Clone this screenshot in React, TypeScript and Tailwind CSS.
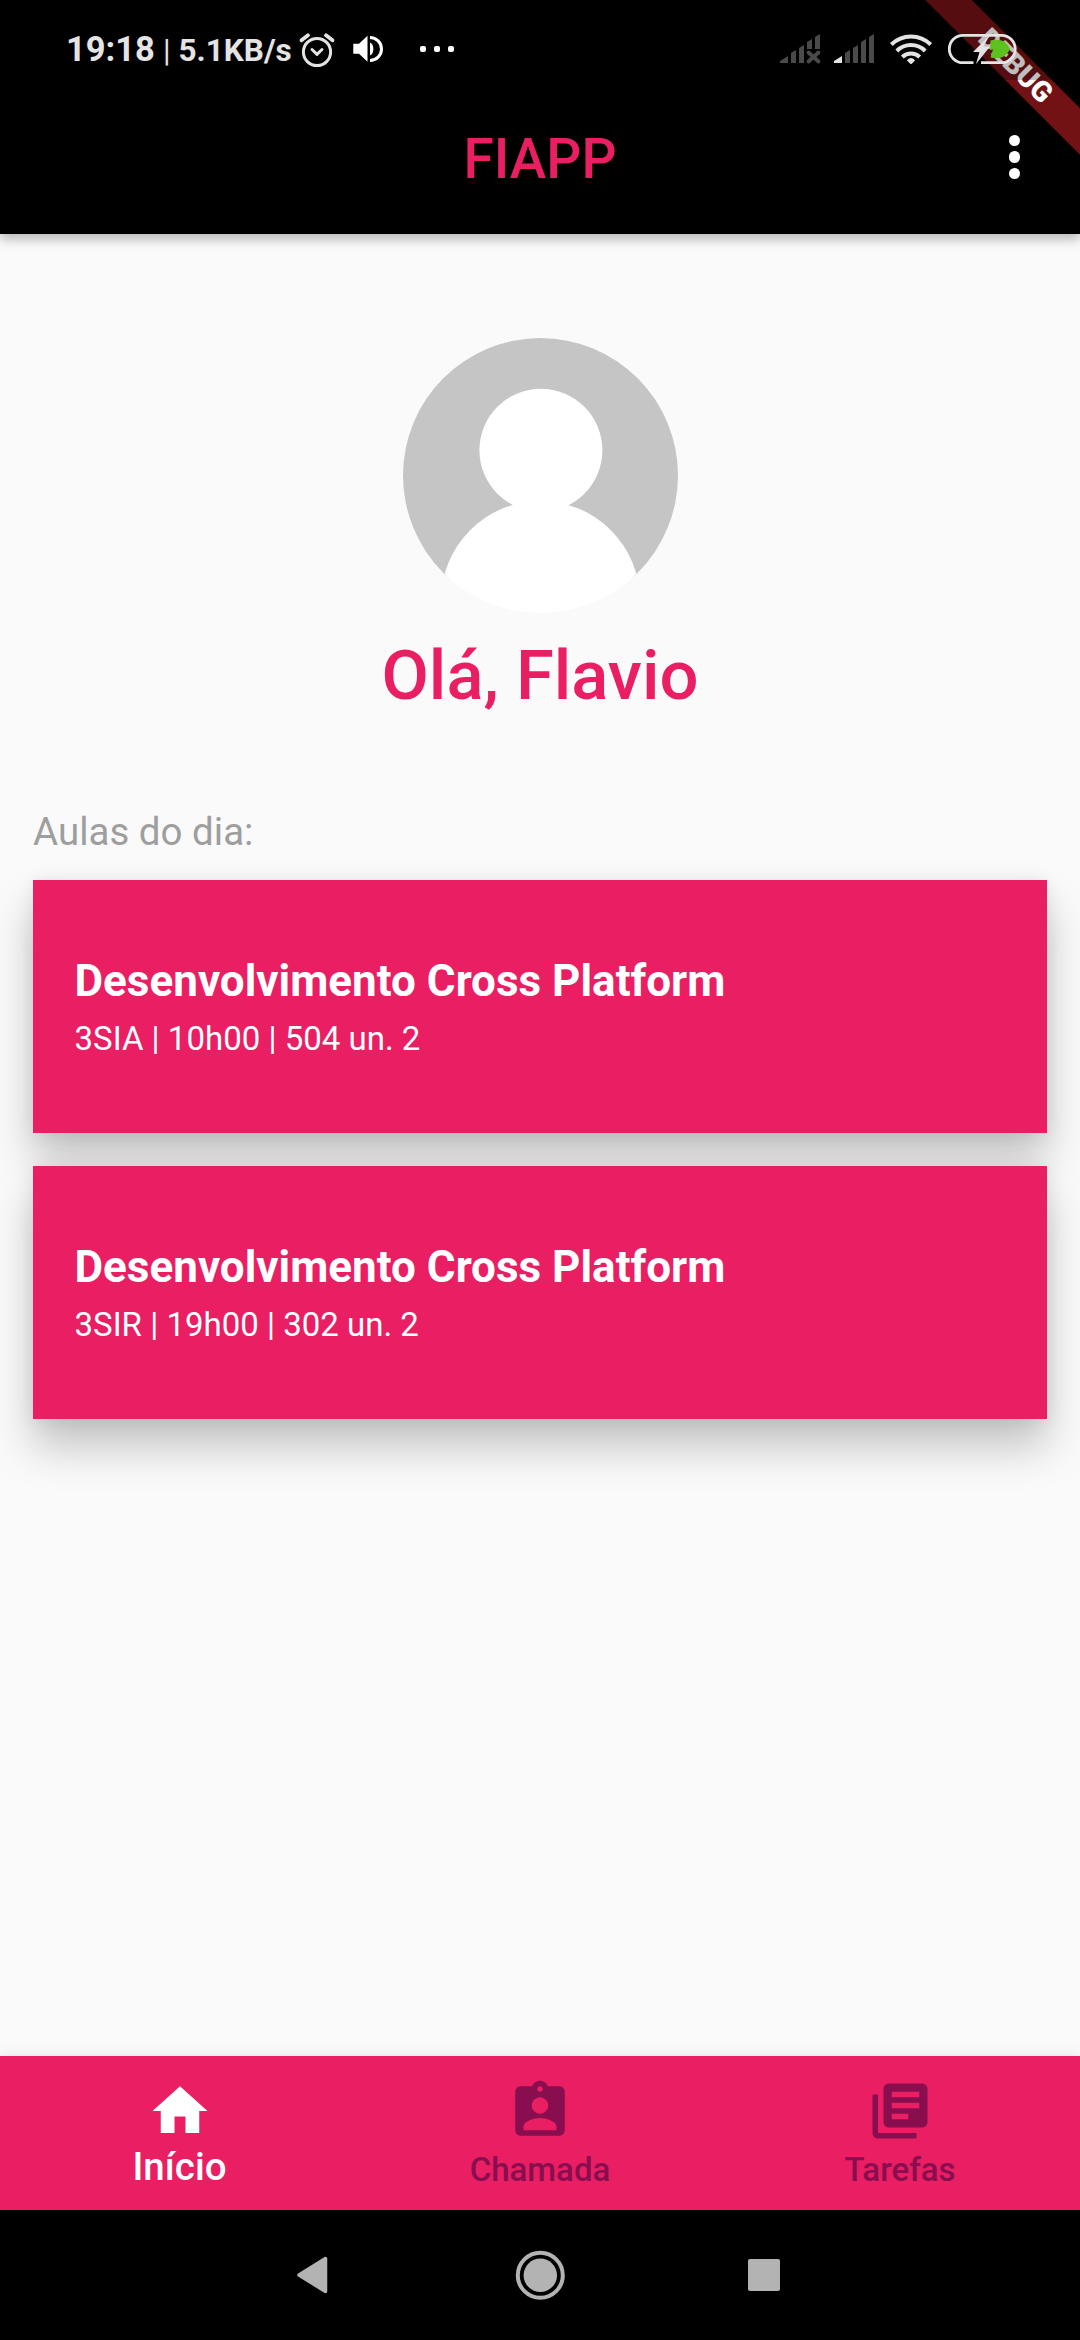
import React from "react";
import { MdAssignmentInd, MdHome, MdLibraryBooks } from "react-icons/md";

function StatusBar() {
  return (
    <div className="relative z-20 flex h-20 items-start bg-black/25 text-[#e4e4e4]">
      <div className="flex h-[100px] w-[294px] shrink-0 items-baseline whitespace-pre pl-[66px] pt-[29px] leading-[40px]">
        <span className="text-[34.500px] font-bold">19:18</span>
        <span className="ml-[8px] text-[31px]">|</span>
        <span className="ml-[8px] text-[31.500px] font-bold">5.1KB/s</span>
      </div>
      <svg className="h-20 w-[786px] shrink-0" viewBox="294 0 786 80" fill="none">
        <g stroke="#e4e4e4" strokeWidth="3" strokeLinecap="round" strokeLinejoin="round">
          <circle cx="317" cy="52" r="13.6" />
          <path d="M312 49.500l5 4.800 5-4.800" />
          <path d="M301.500 40.300l6.500-5M332.500 40.300l-6.500-5" strokeWidth="3.800" />
        </g>
        <path d="M353.300 43.700h5.700l8.500-8v26l-8.500-8h-5.700z" fill="#fff" />
        <path d="M370 42.500c4.500 2 4.500 11 0 13z" fill="#fff" />
        <path d="M370 37.500a11.500 11.500 0 0 1 0 23" stroke="#fff" strokeWidth="3" />
        <g fill="#fff">
          <rect x="420" y="46" width="6" height="6" rx="2" />
          <rect x="434" y="46" width="6" height="6" rx="2" />
          <rect x="448" y="46" width="6" height="6" rx="2" />
        </g>
        <g fill="#4a4a4a">
          <path d="M780 63v-2l8-5v7zM791 63v-10l5-3v13zM799 63V48l5-3v18zM807 49v-7l5-3v10zM815 49V37l5-3v15z" />
          <path d="M845 63V53l5-3v13zM853 63V48l5-3v18zM861 63V42l5-3v24zM869 63V37l5-3v29z" />
        </g>
        <path d="M808.500 52.500l10 9M818.500 52.500l-10 9" stroke="#4a4a4a" strokeWidth="3.800" strokeLinecap="round" />
        <path d="M834 63v-2l8-5v7z" fill="#e4e4e4" />
        <g stroke="#e4e4e4" strokeWidth="4">
          <path d="M891.300 44.500a28 28 0 0 1 39.400 0" />
          <path d="M896.800 51a20 20 0 0 1 28.400 0" />
          <path d="M902.300 57a12.500 12.500 0 0 1 17.400 0" />
        </g>
        <path d="M911 58q3 0 4 2.500l-3 3q-1 1-2 0l-3-3q1-2.500 4-2.500z" fill="#e4e4e4" />
        <path d="M990.500 40.500q5-1.500 11 0c4 1 6.500 4.500 8.500 8.500c-2 4-5 7.500-8.500 8.500q-5.500 1.500-11 0l2.500-8-3 .5z" fill="#5dc21e" />
        <path d="M973.500 62.700H963a13.700 13.700 0 0 1 0-27.400h38.500a13.700 13.700 0 0 1 0 27.400H981" stroke="#e4e4e4" strokeWidth="2.800" />
        <path d="M989.500 35.500L973 52h6.500l-3.500 12 14-17.500h-6.500z" fill="#e4e4e4" />
      </svg>
    </div>
  );
}

function DebugBanner() {
  return (
    <div className="absolute right-0 top-0 z-10 h-[234px] w-[234px] overflow-hidden">
      <div className="absolute left-[19px] top-[50px] flex h-[33px] w-[300px] rotate-45 items-center justify-center bg-[#731214] text-[28.500px] leading-none font-black text-white">
        DEBUG
      </div>
    </div>
  );
}

function AppBar() {
  return (
    <header className="relative z-10 h-[234px] shrink-0 bg-black shadow-[0_5px_11px_rgba(0,0,0,0.28)]">
      <DebugBanner />
      <StatusBar />
      <div className="grid h-[154px] grid-cols-[1fr_auto_1fr] items-center">
        <span />
        <h1 className="mt-[3px] text-[55px] leading-[64px] font-medium text-[#e91e63]">FIAPP</h1>
        <button className="mr-[60px] flex flex-col gap-[5.500px] justify-self-end" aria-label="Menu">
          <span className="size-[11.200px] rounded-full bg-white" />
          <span className="size-[11.200px] rounded-full bg-white" />
          <span className="size-[11.200px] rounded-full bg-white" />
        </button>
      </div>
    </header>
  );
}

function Avatar() {
  return (
    <svg className="size-[275px]" viewBox="402.5 338 275 275">
      <defs>
        <clipPath id="avatar">
          <circle cx="540" cy="475.500" r="137.500" />
        </clipPath>
      </defs>
      <g clipPath="url(#avatar)">
        <path d="M402 338h276v240H402z" fill="#c5c5c5" />
        <circle cx="540.400" cy="450.300" r="61.500" fill="#fff" />
        <circle cx="540" cy="600.500" r="99.500" fill="#fff" />
      </g>
    </svg>
  );
}

function ClassCard({ title, details }: { title: string; details: string }) {
  return (
    <article className="flex h-[253px] flex-col justify-center bg-[#e91e63] px-[41.500px] text-white shadow-[0_28px_41px_rgba(0,0,0,0.22),0_2px_18px_rgba(0,0,0,0.08)]">
      <h2 className="text-[44px] leading-[52px] font-bold">{title}</h2>
      <p className="mt-[12px] text-[33px] leading-[39px]">{details}</p>
    </article>
  );
}

const classes = [
  { title: "Desenvolvimento Cross Platform", details: "3SIA | 10h00 | 504 un. 2" },
  { title: "Desenvolvimento Cross Platform", details: "3SIR | 19h00 | 302 un. 2" },
];

function BottomTabs() {
  return (
    <nav className="relative grid h-[154px] shrink-0 grid-cols-3 bg-[#e91e63] pt-[22px] font-medium shadow-[0_0_14px_rgba(0,0,0,0.1)]">
      <div className="flex flex-col items-center text-white">
        <MdHome className="size-[66px]" />
        <span className="mt-px mr-px text-[38.500px] leading-[44px]">Início</span>
      </div>
      <div className="flex flex-col items-center text-[#880e4f]">
        <MdAssignmentInd className="size-[66px]" />
        <span className="mt-[6px] text-[33px] leading-[39px]">Chamada</span>
      </div>
      <div className="flex flex-col items-center text-[#880e4f]">
        <MdLibraryBooks className="size-[66px]" />
        <span className="mt-[6px] text-[33px] leading-[39px]">Tarefas</span>
      </div>
    </nav>
  );
}

function SystemNavigation() {
  return (
    <div className="relative grid h-[130px] shrink-0 grid-cols-[1fr_auto_1fr] items-center bg-black">
      <svg className="mr-[187px] h-[38px] w-[32px] justify-self-end" viewBox="0 0 32 38">
        <path d="M3 19L29.500 2.500v33z" fill="#b3b3b3" stroke="#b3b3b3" strokeWidth="3.500" strokeLinejoin="round" />
      </svg>
      <svg className="size-[50px]" viewBox="0 0 50 50">
        <circle cx="25.300" cy="25.300" r="22.500" fill="none" stroke="#b3b3b3" strokeWidth="4" />
        <circle cx="25.300" cy="25.300" r="16.700" fill="#b3b3b3" />
      </svg>
      <span className="ml-[183px] size-[32px] rounded-[2px] bg-[#b3b3b3]" />
    </div>
  );
}

export default function App() {
  return (
    <div className="flex h-[2340px] w-[1080px] flex-col overflow-hidden bg-[#fafafa] font-['Roboto',sans-serif]">
      <AppBar />
      <main className="flex flex-1 flex-col px-[33px] pt-[104px]">
        <div className="flex flex-col items-center">
          <Avatar />
          <p className="mt-[23px] text-[68.750px] leading-[80px] font-medium text-[#e91e63]">Olá, Flavio</p>
        </div>
        <p className="mt-[93px] text-[38.500px] leading-[45px] text-[#9e9e9e]">Aulas do dia:</p>
        <section className="mt-[26px] flex flex-col gap-[33px]">
          {classes.map((item) => (
            <ClassCard key={item.details} title={item.title} details={item.details} />
          ))}
        </section>
      </main>
      <BottomTabs />
      <SystemNavigation />
    </div>
  );
}
